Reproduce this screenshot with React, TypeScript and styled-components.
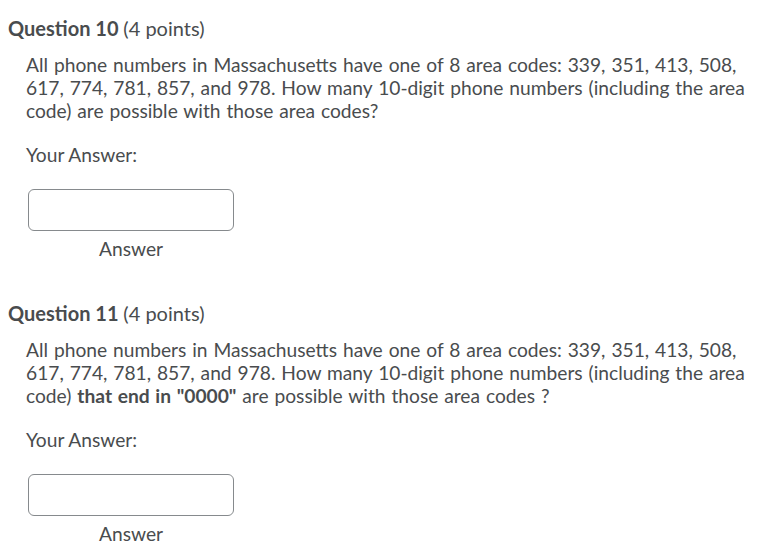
import React from "react";
import styled, { createGlobalStyle } from "styled-components";

const Global = createGlobalStyle`
  body { margin: 0; background: #fff; font-family: Lato, "Open Sans", sans-serif; color: #494c4e; }
`;

const Page = styled.div`
  padding: 16px 0 0 8px;
  display: flex;
  flex-direction: column;
`;

const Question = styled.section`
  display: flex;
  flex-direction: column;
  margin-bottom: 41px;
`;

const Heading = styled.h2`
  margin: 0;
  font-size: 20px;
  line-height: 24px;
  font-weight: 700;
  color: #494c4e;
  span { font-weight: 400; }
`;

const Body = styled.div`
  padding-left: 18px;
  padding-top: 13px;
  display: flex;
  flex-direction: column;
`;

const Prompt = styled.p`
  margin: 0;
  font-size: 19.2px;
  line-height: 23px;
  word-spacing: 1px;
  max-width: 735px;
  b { font-weight: 700; }
`;

const Label = styled.div`
  margin-top: 21px;
  font-size: 19.2px;
  line-height: 23px;
`;

const Field = styled.div`
  margin-top: 23px;
  margin-left: 2px;
  width: 206px;
  display: flex;
  flex-direction: column;
  align-items: center;
`;

const Input = styled.div`
  width: 206px;
  height: 42px;
  box-sizing: border-box;
  border: 1px solid #868a8d;
  border-radius: 6px;
  background: #fff;
`;

const Caption = styled.div`
  margin-top: 6px;
  font-size: 19.2px;
  line-height: 23px;
`;

export default function App() {
  return (
    <>
      <Global />
      <Page>
        <Question>
          <Heading>Question 10 <span>(4 points)</span></Heading>
          <Body>
            <Prompt>
              All phone numbers in Massachusetts have one of 8 area codes: 339, 351, 413, 508, 617, 774, 781, 857, and 978. How many 10-digit phone numbers (including the area code) are possible with those area codes?
            </Prompt>
            <Label>Your Answer:</Label>
            <Field>
              <Input />
              <Caption>Answer</Caption>
            </Field>
          </Body>
        </Question>
        <Question>
          <Heading>Question 11 <span>(4 points)</span></Heading>
          <Body>
            <Prompt>
              All phone numbers in Massachusetts have one of 8 area codes: 339, 351, 413, 508, 617, 774, 781, 857, and 978. How many 10-digit phone numbers (including the area code) <b>that end in "0000"</b> are possible with those area codes ?
            </Prompt>
            <Label>Your Answer:</Label>
            <Field>
              <Input />
              <Caption>Answer</Caption>
            </Field>
          </Body>
        </Question>
      </Page>
    </>
  );
}
